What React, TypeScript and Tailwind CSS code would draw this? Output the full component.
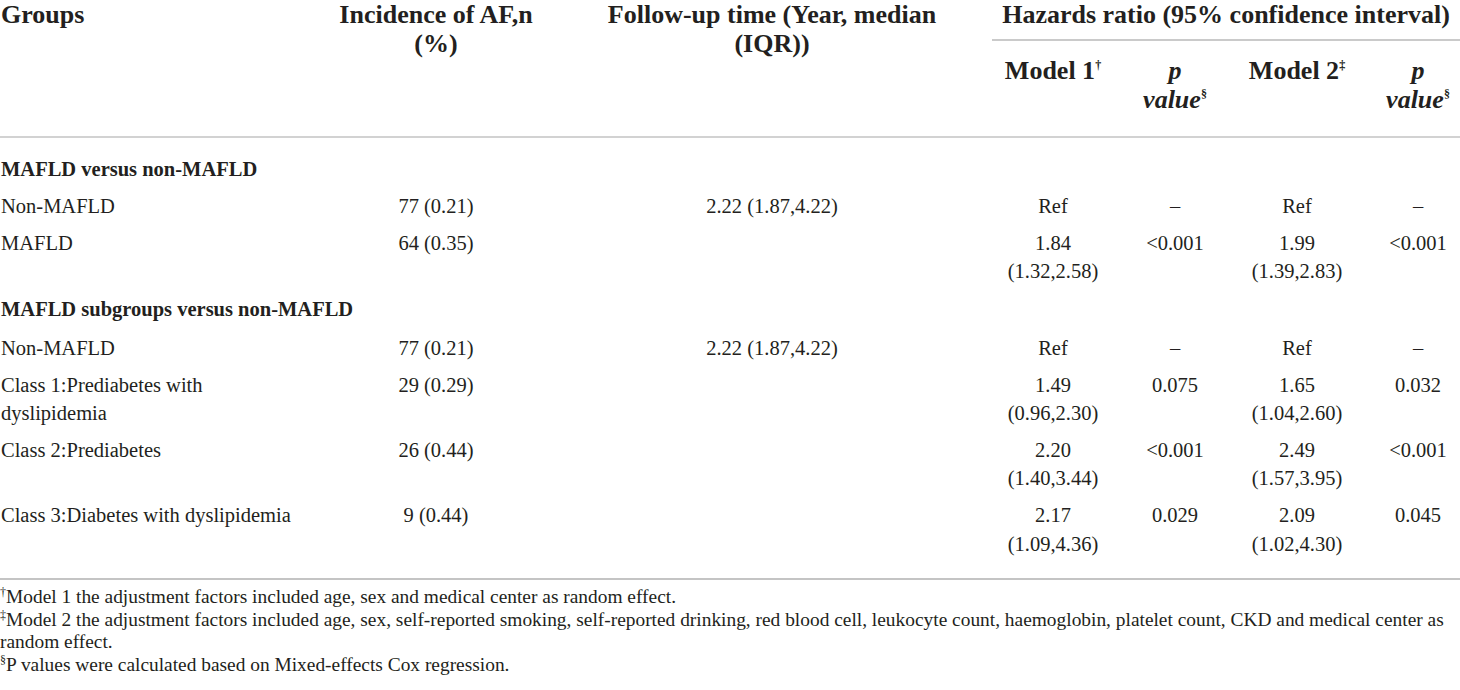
import React from "react";

type Row = {
  head?: string;
  label?: string[];
  inc?: string;
  fu?: string;
  m1?: string[];
  p1?: string;
  m2?: string[];
  p2?: string;
  pad: string;
  last?: boolean;
};

const rows: Row[] = [
  { head: "MAFLD versus non-MAFLD", pad: "pt-[17px] pb-[4.2px]" },
  {
    label: ["Non-MAFLD"],
    inc: "77 (0.21)",
    fu: "2.22 (1.87,4.22)",
    m1: ["Ref"],
    p1: "–",
    m2: ["Ref"],
    p2: "–",
    pad: "py-[4.2px]",
  },
  {
    label: ["MAFLD"],
    inc: "64 (0.35)",
    m1: ["1.84", "(1.32,2.58)"],
    p1: "<0.001",
    m2: ["1.99", "(1.39,2.83)"],
    p2: "<0.001",
    pad: "py-[4.2px]",
  },
  { head: "MAFLD subgroups versus non-MAFLD", pad: "pt-[4.8px] pb-[6.3px]" },
  {
    label: ["Non-MAFLD"],
    inc: "77 (0.21)",
    fu: "2.22 (1.87,4.22)",
    m1: ["Ref"],
    p1: "–",
    m2: ["Ref"],
    p2: "–",
    pad: "py-[4.2px]",
  },
  {
    label: ["Class 1:Prediabetes with", "dyslipidemia"],
    inc: "29 (0.29)",
    m1: ["1.49", "(0.96,2.30)"],
    p1: "0.075",
    m2: ["1.65", "(1.04,2.60)"],
    p2: "0.032",
    pad: "py-[4.2px]",
  },
  {
    label: ["Class 2:Prediabetes"],
    inc: "26 (0.44)",
    m1: ["2.20", "(1.40,3.44)"],
    p1: "<0.001",
    m2: ["2.49", "(1.57,3.95)"],
    p2: "<0.001",
    pad: "py-[4.2px]",
  },
  {
    label: ["Class 3:Diabetes with dyslipidemia"],
    inc: "9 (0.44)",
    m1: ["2.17", "(1.09,4.36)"],
    p1: "0.029",
    m2: ["2.09", "(1.02,4.30)"],
    p2: "0.045",
    pad: "pt-[4.2px] pb-[19.5px]",
    last: true,
  },
];

function Lines({ items }: { items?: string[] }) {
  if (!items) return null;
  return (
    <>
      {items.map((t, i) => (
        <div key={i}>{t}</div>
      ))}
    </>
  );
}

export default function App() {
  return (
    <div className="w-[1460px] h-[690px] overflow-hidden bg-white text-[#231f20] font-['Liberation_Serif','Times_New_Roman',serif]">
      <table className="w-[1460px] table-fixed border-collapse">
        <colgroup>
          <col className="w-[320px]" />
          <col className="w-[232px]" />
          <col className="w-[440px]" />
          <col className="w-[122px]" />
          <col className="w-[122px]" />
          <col className="w-[122px]" />
          <col className="w-[102px]" />
        </colgroup>
        <thead className="text-[26px] leading-[29px] font-bold">
          <tr>
            <th rowSpan={2} className="p-0 pl-[1px] text-left align-top border-b-2 border-[#d2d2d2]">
              Groups
            </th>
            <th rowSpan={2} className="p-0 text-center align-top border-b-2 border-[#d2d2d2]">
              Incidence of AF,n
              <br />
              (%)
            </th>
            <th rowSpan={2} className="p-0 text-center align-top border-b-2 border-[#d2d2d2]">
              Follow-up time (Year, median
              <br />
              (IQR))
            </th>
            <th colSpan={4} className="p-0 pb-[10px] text-center align-top whitespace-nowrap border-b-2 border-[#cacaca]">
              Hazards ratio (95% confidence interval)
            </th>
          </tr>
          <tr>
            <th className="p-0 pt-[15px] pb-[22px] text-center align-top whitespace-nowrap border-b-2 border-[#d2d2d2]">
              Model 1<span className="relative -top-[10px] text-[12px] leading-[0] font-bold">†</span>
            </th>
            <th className="p-0 pt-[15px] pb-[22px] text-center align-top italic border-b-2 border-[#d2d2d2]">
              p
              <br />
              value<span className="relative -top-[10px] text-[12px] leading-[0] not-italic">§</span>
            </th>
            <th className="p-0 pt-[15px] pb-[22px] text-center align-top whitespace-nowrap border-b-2 border-[#d2d2d2]">
              Model 2<span className="relative -top-[10px] text-[12px] leading-[0] font-bold">‡</span>
            </th>
            <th className="p-0 pl-[18px] pt-[15px] pb-[22px] text-center align-top italic border-b-2 border-[#d2d2d2]">
              p
              <br />
              value<span className="relative -top-[10px] text-[12px] leading-[0] not-italic">§</span>
            </th>
          </tr>
        </thead>
        <tbody className="text-[20.5px] leading-[28.5px]">
          {rows.map((r, i) =>
            r.head ? (
              <tr key={i}>
                <td colSpan={7} className={`${r.pad} px-0 pl-[1px] text-left align-top font-bold`}>
                  {r.head}
                </td>
              </tr>
            ) : (
              <tr key={i} className={r.last ? "border-b-2 border-[#c4c4c4]" : ""}>
                <td className={`${r.pad} px-0 pl-[1px] text-left align-top`}>
                  <Lines items={r.label} />
                </td>
                <td className={`${r.pad} px-0 text-center align-top`}>{r.inc}</td>
                <td className={`${r.pad} px-0 text-center align-top`}>{r.fu}</td>
                <td className={`${r.pad} px-0 text-center align-top`}>
                  <Lines items={r.m1} />
                </td>
                <td className={`${r.pad} px-0 text-center align-top`}>{r.p1}</td>
                <td className={`${r.pad} px-0 text-center align-top`}>
                  <Lines items={r.m2} />
                </td>
                <td className={`${r.pad} px-0 pl-[18px] text-center align-top`}>{r.p2}</td>
              </tr>
            )
          )}
        </tbody>
      </table>
      <div className="mt-[6px] text-[19.4px] leading-[22.7px] whitespace-nowrap">
        <div>
          <span className="relative -top-[7px] text-[12px] leading-[0]">†</span>Model 1 the adjustment factors included age, sex and medical center as random effect.
        </div>
        <div>
          <span className="relative -top-[7px] text-[12px] leading-[0]">‡</span>Model 2 the adjustment factors included age, sex, self-reported smoking, self-reported drinking, red blood cell, leukocyte count, haemoglobin, platelet count, CKD and medical center as
        </div>
        <div>random effect.</div>
        <div>
          <span className="relative -top-[7px] text-[12px] leading-[0]">§</span>P values were calculated based on Mixed-effects Cox regression.
        </div>
      </div>
    </div>
  );
}
